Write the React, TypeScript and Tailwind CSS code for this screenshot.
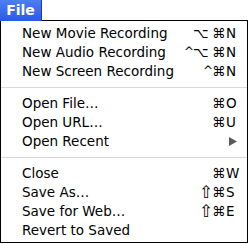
import React from 'react';

type Item =
  | { kind: 'item'; label: string; mods?: string[]; key?: string; submenu?: boolean }
  | { kind: 'sep' };

const items: Item[] = [
  { kind: 'item', label: 'New Movie Recording', mods: ['⌥', '⌘'], key: 'N' },
  { kind: 'item', label: 'New Audio Recording', mods: ['^', '⌥', '⌘'], key: 'N' },
  { kind: 'item', label: 'New Screen Recording', mods: ['^', '⌘'], key: 'N' },
  { kind: 'sep' },
  { kind: 'item', label: 'Open File…', mods: ['⌘'], key: 'O' },
  { kind: 'item', label: 'Open URL…', mods: ['⌘'], key: 'U' },
  { kind: 'item', label: 'Open Recent', submenu: true },
  { kind: 'sep' },
  { kind: 'item', label: 'Close', mods: ['⌘'], key: 'W' },
  { kind: 'item', label: 'Save As…', mods: ['⇧', '⌘'], key: 'S' },
  { kind: 'item', label: 'Save for Web…', mods: ['⇧', '⌘'], key: 'E' },
  { kind: 'item', label: 'Revert to Saved' },
];

// modifier glyphs sit in fixed columns, like the mac menu does
const modClass: Record<string, string> = {
  '^': 'w-[8px] text-[12px] flex justify-center overflow-visible',
  '⌥': 'w-[19px] pr-[7px] flex justify-start',
  '⇧': 'w-[13px] text-[17px] flex justify-start',
  '⌘': 'w-[13px] flex justify-start',
};

const MenuRow = ({ item }: { item: Extract<Item, { kind: 'item' }> }) => (
  <div className="flex items-center h-[19px] leading-[19px] pl-[21px]">
    <span className="flex-1 whitespace-nowrap">{item.label}</span>
    {item.submenu ? (
      <svg width="8" height="9" viewBox="0 0 8 9" className="mr-[10px]">
        <path d="M0 0 L8 4.5 L0 9 Z" fill="#5a5a5a" />
      </svg>
    ) : (
      <>
        <span className="flex justify-end items-center shrink-0">
          {item.mods?.map((m, i) => (
            <span key={i} className={modClass[m]}>
              {m}
            </span>
          ))}
        </span>
        <span className="w-[22px] pl-px shrink-0">{item.key}</span>
      </>
    )}
  </div>
);

export default function App() {
  return (
    <div
      className="w-[249px] h-[244px] bg-white text-black text-[13.5px]"
      style={{ fontFamily: '"DejaVu Sans", Verdana, sans-serif' }}
    >
      {/* menu title */}
      <div className="relative z-10 w-[42px] h-[21px] flex items-center justify-center bg-gradient-to-b from-[#4f7ef4] to-[#2a58e6] border-r border-[#1d3a9c] text-white font-bold text-[14px]">
        File
      </div>

      {/* dropdown */}
      <div className="-mt-px w-[248px] h-[223px] border border-black bg-white pt-[3px] pb-px">
        {items.map((item, i) =>
          item.kind === 'sep' ? (
            <div key={i} className="h-[13px] flex flex-col">
              <div className="h-[6px]" />
              <div className="h-px bg-[#d9d9d9]" />
            </div>
          ) : (
            <MenuRow key={i} item={item} />
          )
        )}
      </div>
    </div>
  );
}
